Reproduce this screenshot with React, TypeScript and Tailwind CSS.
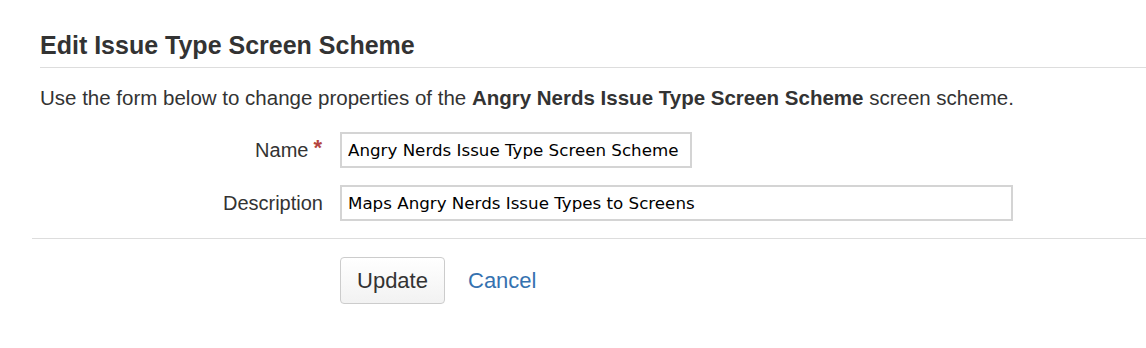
import React from 'react';

export default function App() {
  return (
    <div
      className="h-[348px] w-[1146px] overflow-hidden bg-white text-[#333]"
      style={{ fontFamily: '"Liberation Sans", Arial, sans-serif' }}
    >
      <div className="pl-[40px] pt-[30px]">
        <h2 className="border-b border-[#dddddd] pb-[6px] text-[25px] font-bold leading-[31px]">
          Edit Issue Type Screen Scheme
        </h2>
      </div>

      <p className="pl-[40px] pt-[17px] text-[20.5px] leading-[26px]">
        Use the form below to change properties of the <strong>Angry Nerds Issue Type Screen Scheme</strong> screen
        scheme.
      </p>

      <form className="pt-[21px]">
        <div className="flex items-center pl-[40px]">
          <label className="w-[283px] pr-[1px] text-right text-[20px]">
            Name
            <span className="relative top-[-2px] ml-[5px] text-[22px] font-bold leading-none text-[#b5453f]">*</span>
          </label>
          <input
            defaultValue="Angry Nerds Issue Type Screen Scheme"
            className="ml-[17px] h-[36px] w-[352px] border-2 border-[#d4d4d4] bg-white px-[6px] text-[16.7px] text-black outline-none"
            style={{ fontFamily: '"DejaVu Sans", Verdana, sans-serif' }}
          />
        </div>
        <div className="mt-[17px] flex items-center pl-[40px]">
          <label className="w-[283px] text-right text-[20px]">Description</label>
          <input
            defaultValue="Maps Angry Nerds Issue Types to Screens"
            className="ml-[17px] h-[36px] w-[673px] border-2 border-[#d4d4d4] bg-white px-[6px] text-[16.7px] text-black outline-none"
            style={{ fontFamily: '"DejaVu Sans", Verdana, sans-serif' }}
          />
        </div>

        <div className="ml-[32px] mt-[17px] border-t border-[#dddddd] pl-[308px] pt-[18px]">
          <div className="flex items-center gap-[23px]">
            <button
              type="button"
              className="h-[47px] w-[105px] rounded-[4px] border border-[#cccccc] bg-gradient-to-b from-white to-[#f2f2f2] text-[22px] text-[#333]"
            >
              Update
            </button>
            <a href="#" className="text-[22px] text-[#3572b0]">
              Cancel
            </a>
          </div>
        </div>
      </form>
    </div>
  );
}
